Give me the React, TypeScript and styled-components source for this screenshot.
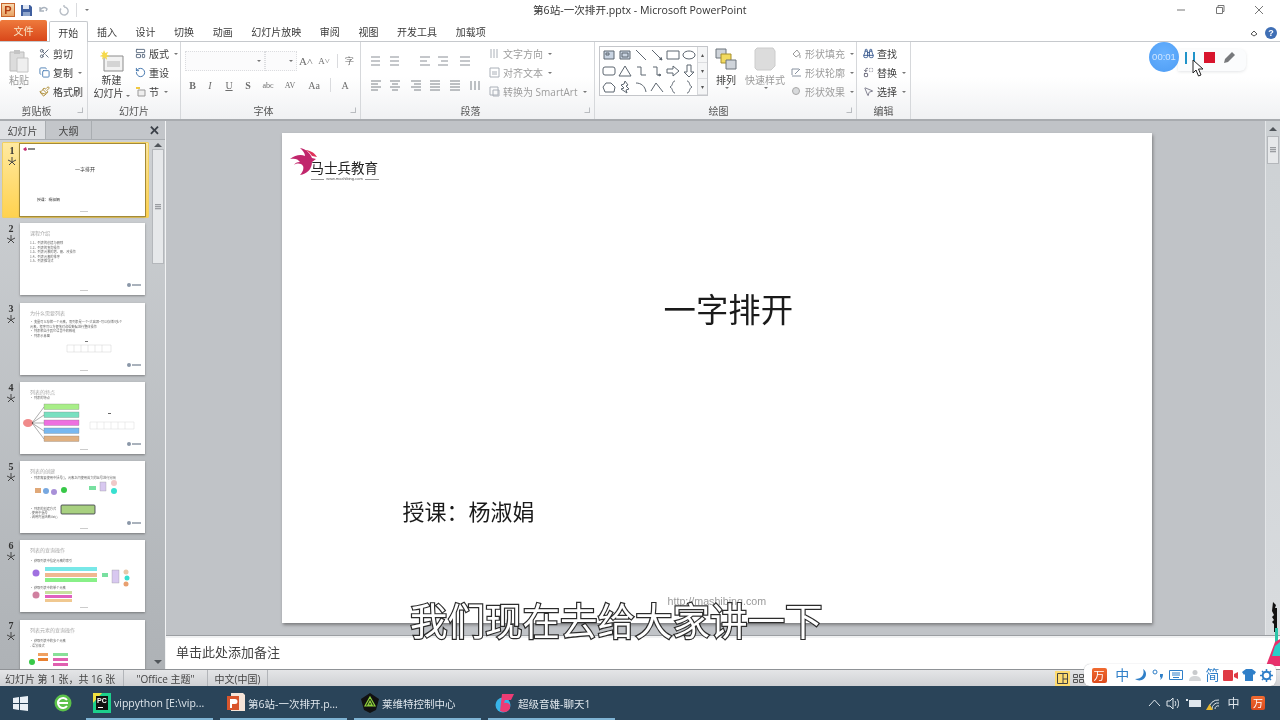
import React from 'react'
import styled, { createGlobalStyle } from 'styled-components'
import { Scissors, Copy, Paintbrush, LayoutTemplate, RotateCcw, Binoculars, Replace, MousePointer2 } from 'lucide-react'

const GlobalStyle = createGlobalStyle`
    html, body {
        margin: 0;
        padding: 0;
        background: #fff;
    }
    * {
        box-sizing: border-box;
    }
`

const CJK = `"Open Sans", "Noto Sans CJK SC", sans-serif`

const Page = styled.div`
    position: relative;
    display: flex;
    flex-direction: column;
    width: 1280px;
    height: 720px;
    overflow: hidden;
    background: #fff;
    font-family: ${CJK};
    font-size: 10px;
    color: #3b3b3b;
    filter: blur(0.3px);
`

/* ---------- title bar ---------- */
const TitleBar = styled.div`
    flex: 0 0 20px;
    display: flex;
    align-items: center;
    position: relative;
    padding-left: 1px;
    background: #fff;
`
const QuickIcons = styled.div`
    display: flex;
    align-items: center;
    gap: 6px;
    width: 500px;
`
const PptBadge = styled.div`
    width: 14px;
    height: 14px;
    background: linear-gradient(#f7d9b0, #e8a264);
    border: 1px solid #c8642c;
    color: #b33c10;
    font: bold 11px/12px "Liberation Sans", sans-serif;
    text-align: center;
`
const TitleText = styled.div`
    position: absolute;
    left: 533px;
    top: 3px;
    font-size: 10.6px;
    line-height: 15px;
    color: #333;
    white-space: nowrap;
`
const WindowButtons = styled.div`
    display: flex;
    margin-left: auto;
    padding-right: 2px;
`
const WindowButton = styled.div`
    width: 39px;
    height: 20px;
    display: flex;
    align-items: center;
    justify-content: center;
`

/* ---------- tabs ---------- */
const TabRow = styled.div`
    flex: 0 0 21px;
    display: flex;
    align-items: flex-end;
    background: #fff;
    border-bottom: 1px solid #c6c9cd;
    position: relative;
`
const FileTab = styled.div`
    width: 47px;
    height: 21px;
    margin-right: 2px;
    display: flex;
    align-items: center;
    justify-content: center;
    background: linear-gradient(#ee7a3c, #d9471a);
    color: #f8e6c8;
    border-radius: 2px 2px 0 0;
`
const Tab = styled.div<{ $active?: boolean }>`
    height: ${p => (p.$active ? '20px' : '19px')};
    padding: 0 9.3px 1px;
    display: flex;
    align-items: center;
    white-space: nowrap;
    color: #3a3a3a;
    ${p =>
        p.$active
            ? `
        background: #fff;
        border: 1px solid #c6c9cd;
        border-bottom: 0;
        margin-bottom: -1px;
        height: 21px;
        border-radius: 2px 2px 0 0;
        padding: 0 8.3px;
    `
            : ''}
`
const HelpArea = styled.div`
    margin-left: auto;
    display: flex;
    align-items: center;
    gap: 7px;
    padding: 0 3px 2px 0;
`
const HelpDot = styled.div`
    width: 12px;
    height: 12px;
    border-radius: 50%;
    background: #3f6fb5;
    color: #fff;
    font: bold 9px/12px "Liberation Sans", sans-serif;
    text-align: center;
`

/* ---------- ribbon ---------- */
const Ribbon = styled.div`
    flex: 0 0 79px;
    min-height: 0;
    display: flex;
    background: linear-gradient(#ffffff 45%, #f0f1f3);
    border-bottom: 2px solid #a8abaf;
`
const Group = styled.div<{ $w: number }>`
    flex: 0 0 ${p => p.$w}px;
    min-height: 0;
    display: flex;
    flex-direction: column;
    border-right: 1px solid #d6d8db;
`
const GroupBody = styled.div<{ $pad?: string; $gap?: number }>`
    flex: 1;
    display: flex;
    padding: ${p => p.$pad || '0'};
    gap: ${p => p.$gap || 0}px;
    min-height: 0;
`
const GroupLabel = styled.div<{ $launch?: boolean }>`
    position: relative;
    flex: 0 0 18px;
    padding: 4px ${p => (p.$launch ? 14 : 0)}px 0 0;
    text-align: center;
    line-height: 15px;
    color: #555;
`
const Launcher = styled.span`
    position: absolute;
    right: 4px;
    top: 7px;
    width: 6px;
    height: 6px;
    border: 1px solid #b9bcc0;
    border-top-color: transparent;
    border-left-color: transparent;
`
const BigButton = styled.div<{ $w: number; $dim?: boolean; $top?: number }>`
    width: ${p => p.$w}px;
    padding-top: ${p => p.$top || 0}px;
    display: flex;
    flex-direction: column;
    align-items: center;
    line-height: 13px;
    color: ${p => (p.$dim ? '#9a9a9a' : '#3b3b3b')};
    white-space: nowrap;
`
const BigIcon = styled.div<{ $h: number }>`
    height: ${p => p.$h}px;
    display: flex;
    align-items: center;
    justify-content: center;
`
const BigText = styled.div<{ $top?: number }>`
    margin-top: ${p => p.$top || 0}px;
`
const Stack = styled.div`
    display: flex;
    flex-direction: column;
    gap: 2px;
    padding-top: 3px;
`
const SmallButton = styled.div<{ $dim?: boolean }>`
    height: 17.5px;
    display: flex;
    align-items: center;
    gap: 3px;
    white-space: nowrap;
    color: ${p => (p.$dim ? '#9c9c9c' : '#3b3b3b')};
    font-size: 10px;
`
const Caret = styled.span`
    display: inline-block;
    width: 0;
    height: 0;
    margin-left: 2px;
    border: 2px solid transparent;
    border-top: 2.5px solid #777;
    border-bottom: 0;
`
const FontRows = styled.div`
    display: flex;
    flex-direction: column;
    gap: 4px;
    padding: 9px 0 0 4px;
`
const ListRows = styled(FontRows)`
    padding-left: 7px;
    width: 127px;
`
const FontRow = styled.div<{ $gap?: number }>`
    height: 20px;
    display: flex;
    align-items: center;
    gap: ${p => p.$gap ?? 0}px;
`
const Combo = styled.div<{ $w: number }>`
    width: ${p => p.$w}px;
    height: 20px;
    display: flex;
    align-items: center;
    justify-content: flex-end;
    padding-right: 3px;
    border: 1px dotted #dcdde0;
    background: #fbfbfc;
`
const Glyph = styled.span<{ $w: number; $b?: boolean; $i?: boolean; $u?: boolean; $size?: number }>`
    width: ${p => p.$w}px;
    text-align: center;
    font-family: "Liberation Serif", serif;
    font-size: ${p => p.$size || 10}px;
    color: #6d6d6d;
    font-weight: ${p => (p.$b ? 'bold' : 'normal')};
    font-style: ${p => (p.$i ? 'italic' : 'normal')};
    text-decoration: ${p => (p.$u ? 'underline' : 'none')};
`
const Bar = styled.span<{ $flush?: boolean }>`
    width: 1px;
    height: 14px;
    margin: ${p => (p.$flush ? '0' : '0 4px')};
    background: #dadbde;
`
const Gallery = styled.div`
    margin: 4px 0 0 4px;
    display: flex;
    width: 109px;
    height: 50px;
    background: #fff;
    border: 1px solid #c4c6ca;
`
const ShapeGrid = styled.div`
    display: grid;
    grid-template-columns: repeat(6, 16px);
    grid-auto-rows: 16px;
    width: 97px;
    padding-left: 1px;
`
const GalleryScroll = styled.div`
    flex: 1;
    display: flex;
    flex-direction: column;
    border-left: 1px solid #d6d8db;
    background: #f4f5f6;
`
const GalleryStep = styled.div`
    flex: 1;
    display: flex;
    align-items: center;
    justify-content: center;
    border-bottom: 1px solid #dcdde0;
    font-size: 6px;
    color: #555;
    font-family: "DejaVu Sans", sans-serif;
`

/* ---------- main area ---------- */
const Main = styled.div`
    flex: 1;
    min-height: 0;
    display: flex;
    background: #c0c3c7;
`
const SidePane = styled.div`
    flex: 0 0 166px;
    display: flex;
    flex-direction: column;
    background: linear-gradient(#cfd2d5, #aeb2b6);
    border-right: 1px solid #f2f3f4;
`
const PaneTabs = styled.div`
    flex: 0 0 19px;
    display: flex;
    align-items: stretch;
    background: #c3c6ca;
    border-bottom: 1px solid #a9adb1;
`
const PaneTab = styled.div<{ $active?: boolean }>`
    width: 46px;
    display: flex;
    align-items: center;
    justify-content: center;
    font-size: 10px;
    background: ${p => (p.$active ? '#dfe1e4' : 'transparent')};
    border-right: 1px solid #a9adb1;
    color: #444;
`
const PaneClose = styled.div`
    margin-left: auto;
    width: 21px;
    display: flex;
    align-items: center;
    justify-content: center;
    font: bold 13px "Liberation Sans", sans-serif;
    color: #3b4048;
`
const PaneBody = styled.div`
    flex: 1;
    min-height: 0;
    display: flex;
    overflow: hidden;
`
const ThumbList = styled.div`
    flex: 0 0 150px;
    padding-top: 2px;
    display: flex;
    flex-direction: column;
    gap: 3.3px;
    overflow: hidden;
`
const ThumbRow = styled.div<{ $active?: boolean }>`
    flex: 0 0 76px;
    margin-left: 2px;
    width: 147px;
    display: flex;
    align-items: center;
    padding-left: 18px;
    position: relative;
    border-radius: 1px;
    ${p =>
        p.$active
            ? `
        background: linear-gradient(#ffe9a0, #ffd24f);
        border: 1px solid #f2d060;
        padding-left: 17px;
    `
            : ''}
`
const ThumbIndex = styled.div`
    position: absolute;
    left: 2px;
    top: 2px;
    width: 14px;
    display: flex;
    flex-direction: column;
    align-items: center;
    font: bold 10px/12px "Liberation Serif", serif;
    color: #333;
`
const ThumbCard = styled.div<{ $active?: boolean }>`
    width: 125px;
    height: 72px;
    background: #fff;
    box-shadow: 0 1px 2px rgba(60, 60, 60, 0.5);
    ${p => (p.$active ? 'outline: 1px solid #a38a38;' : '')}
    svg {
        display: block;
        font-family: "Noto Sans CJK SC", sans-serif;
    }
`
const PaneScroll = styled.div`
    flex: 0 0 13px;
    margin: 3px 0 0 1px;
    padding-bottom: 5px;
    display: flex;
    flex-direction: column;
    align-items: center;
`
const ScrollThumb = styled.div<{ $h: number; $mt?: number }>`
    width: 12px;
    height: ${p => p.$h}px;
    margin-top: ${p => p.$mt || 0}px;
    background: #e6e8ea;
    border: 1px solid #b4b7bb;
    display: flex;
    align-items: center;
    justify-content: center;
`
const Grip = styled.div`
    width: 6px;
    height: 6px;
    background: repeating-linear-gradient(#9a9da1 0 1px, #d0d2d5 1px 2px);
`
const Arrow = styled.div<{ $down?: boolean; $mt?: string }>`
    width: 0;
    height: 0;
    margin-top: ${p => p.$mt || '0'};
    border: 4px solid transparent;
    ${p => (p.$down ? 'border-top: 4px solid #50555a; border-bottom: 0;' : 'border-bottom: 4px solid #50555a; border-top: 0;')}
`

const Center = styled.div`
    flex: 1;
    min-width: 0;
    display: flex;
    flex-direction: column;
`
const WorkRow = styled.div`
    flex: 1;
    min-height: 0;
    display: flex;
    border-bottom: 1px solid #9b9ea2;
`
const Canvas = styled.div`
    flex: 1;
    display: flex;
    justify-content: center;
    padding-top: 12px;
    padding-left: 2px;
`
const Slide = styled.div`
    position: relative;
    width: 870px;
    height: 490px;
    background: #fff;
    box-shadow: 1px 2px 3px rgba(70, 70, 70, 0.55);
`
const Logo = styled.div`
    position: absolute;
    left: 7px;
    top: 14px;
    width: 92px;
    height: 36px;
`
const LogoName = styled.div`
    position: absolute;
    left: 22px;
    top: 13px;
    font-size: 13.5px;
    line-height: 17px;
    color: #222;
    white-space: nowrap;
`
const LogoUrl = styled.div`
    position: absolute;
    left: 22px;
    top: 29px;
    width: 68px;
    display: flex;
    align-items: center;
    gap: 2px;
    font: 4px/6px "Liberation Sans", sans-serif;
    color: #555;
    &::before,
    &::after {
        content: '';
        flex: 1;
        height: 1px;
        background: #999;
    }
`
const SlideTitle = styled.div`
    position: absolute;
    left: 382px;
    top: 156px;
    font-size: 32.4px;
    line-height: 40px;
    color: #1a1a1a;
    white-space: nowrap;
`
const SlideAuthor = styled.div`
    position: absolute;
    left: 121px;
    top: 363px;
    font-size: 22px;
    line-height: 30px;
    color: #1a1a1a;
    white-space: nowrap;
`
const SlideUrl = styled.div`
    position: absolute;
    left: 386px;
    top: 461px;
    font: 10.7px/14px "Liberation Sans", sans-serif;
    color: #9a9a9a;
`
const MainScroll = styled.div`
    flex: 0 0 15px;
    display: flex;
    flex-direction: column;
    align-items: center;
    padding-top: 6px;
    background: linear-gradient(#cdd1d4, #d8dbde);
    border-left: 1px solid #e4e6e8;
`
const Notes = styled.div`
    flex: 0 0 33px;
    padding: 5px 0 0 10px;
    background: #fff;
    border-top: 2px solid #f0f1f2;
    font-size: 13px;
    line-height: 18px;
    color: #444;
`

/* ---------- status bar ---------- */
const StatusBar = styled.div`
    flex: 0 0 17px;
    display: flex;
    align-items: center;
    background: linear-gradient(#e4e5e7, #cfd1d4);
    border-top: 1px solid #8f9296;
    font-size: 10px;
    color: #444;
`
const StatusCell = styled.div<{ $w: number; $center?: boolean }>`
    width: ${p => p.$w}px;
    height: 100%;
    display: flex;
    align-items: center;
    justify-content: ${p => (p.$center ? 'center' : 'flex-start')};
    padding-left: ${p => (p.$center ? 0 : 5)}px;
    border-right: 1px solid #b2b5b9;
    white-space: nowrap;
`
const ViewButtons = styled.div`
    margin-left: auto;
    margin-right: 194px;
    display: flex;
    align-items: center;
    gap: 1px;
`
const ViewButton = styled.div<{ $on?: boolean }>`
    width: 15px;
    height: 15px;
    display: flex;
    align-items: center;
    justify-content: center;
    background: ${p => (p.$on ? '#ffdc70' : 'transparent')};
`

/* ---------- taskbar ---------- */
const Taskbar = styled.div`
    flex: 0 0 34px;
    display: flex;
    align-items: center;
    background: #2a4459;
    color: #dfe6ec;
    font-size: 10.5px;
`
const Launch = styled.div<{ $w: number }>`
    width: ${p => p.$w}px;
    height: 100%;
    display: flex;
    align-items: center;
    justify-content: center;
`
const TaskItem = styled.div`
    position: relative;
    width: 127px;
    height: 100%;
    margin-right: 7px;
    padding-left: 7px;
    display: flex;
    align-items: center;
    gap: 3px;
    white-space: nowrap;
    &::after {
        content: '';
        position: absolute;
        left: 0;
        right: 0;
        bottom: 0;
        height: 2px;
        background: #7fb4d4;
    }
`
const Tray = styled.div`
    margin-left: auto;
    display: flex;
    align-items: center;
    gap: 5px;
    padding-right: 10px;
    font-size: 12px;
`
const TrayCell = styled.div<{ $w: number }>`
    width: ${p => p.$w}px;
    display: flex;
    justify-content: center;
`
const WanBadge = styled.div<{ $size: number }>`
    width: ${p => p.$size}px;
    height: ${p => p.$size}px;
    border-radius: 2px;
    background: linear-gradient(#f06a30, #dc4a1c);
    color: #fff;
    display: flex;
    align-items: center;
    justify-content: center;
    font-size: ${p => p.$size - 4}px;
    line-height: 1;
`

/* ---------- things lying over the page ---------- */
const Recorder = styled.div`
    position: absolute;
    left: 1149px;
    top: 42px;
    height: 30px;
    display: flex;
    align-items: center;
`
const Timer = styled.div`
    width: 30px;
    height: 30px;
    border-radius: 50%;
    background: radial-gradient(circle at 50% 40%, #68b2ff, #4d9cf4);
    color: #cfe6ff;
    font: 9.5px/30px "Liberation Sans", sans-serif;
    text-align: center;
    z-index: 1;
`
const RecorderTray = styled.div`
    height: 22px;
    margin-top: 5px;
    margin-left: -1px;
    padding: 0 10px 4px 7px;
    display: flex;
    align-items: center;
    background: #fbfcfd;
    border-radius: 0 6px 6px 0;
    box-shadow: 0 1px 3px rgba(120, 130, 140, 0.2);
`
const PauseBar = styled.span`
    width: 2px;
    height: 12px;
    margin-right: 6px;
    background: #1f93c9;
`
const StopSquare = styled.span`
    width: 11px;
    height: 11px;
    margin: 0 8px 0 3px;
    background: #d8152d;
`
const Cursor = styled.svg`
    position: absolute;
    left: 1192px;
    top: 59px;
`
const Subtitle = styled.div`
    position: absolute;
    left: 410px;
    top: 598px;
    font-size: 37.5px;
    font-weight: 400;
    line-height: 46px;
    color: #fff;
    white-space: nowrap;
    -webkit-text-stroke: 2.4px #2c2c2c;
    paint-order: stroke fill;
`
const ImeBar = styled.div`
    position: absolute;
    left: 1084px;
    top: 664px;
    width: 192px;
    height: 22px;
    padding-left: 6px;
    display: flex;
    align-items: center;
    background: #fff;
    border-radius: 6px;
    box-shadow: 0 0 1px rgba(80, 90, 100, 0.5);
`
const ImeCell = styled.div<{ $gapLeft?: number; $size?: number }>`
    width: 18.2px;
    margin-left: ${p => p.$gapLeft || 0}px;
    display: flex;
    justify-content: center;
    font-size: ${p => p.$size || 14}px;
    line-height: 18px;
    color: #2f7fc8;
`
const Mascot = styled.svg`
    position: absolute;
    left: 1262px;
    top: 598px;
`

const tabs = ['插入', '设计', '切换', '动画', '幻灯片放映', '审阅', '视图', '开发工具', '加载项']

const shapePaths = [
    'M3 4h10v8H3z M5 6h3v2H5z',
    'M3 4h10v8H3z M5 6h6v4H5z',
    'M3 3l10 10',
    'M3 3l10 10 M13 13l-3-1 M13 13l-1-3',
    'M2 4h12v8H2z',
    'M8 4a6 4 0 1 0 .01 0z',
    'M4 4h8a2 2 0 0 1 2 2v4a2 2 0 0 1-2 2H4a2 2 0 0 1-2-2V6a2 2 0 0 1 2-2z',
    'M8 3l6 10H2z',
    'M4 4h4v8h5',
    'M4 4h4v8h4 M12 12l-2-1v2z',
    'M2 6h6V3l6 5-6 5v-3H2z',
    'M6 2h4v7h3l-5 5-5-5h3z',
    'M5 4l5 0 4 4-1 5H4L2 8z',
    'M8 2l3 4-2 1 3 3-3 1 1 3-6-4 3-1-3-3 3-1z',
    'M3 4c5 0 9 3 10 9',
    'M2 12l5-8 7 9',
    'M10 2C7 2 8 7 5 8c3 1 2 6 5 6',
    'M6 2c3 0 2 5 5 6-3 1-2 6-5 6',
]

function ShapeIcon({ d, dark }: { d: string; dark?: boolean }): React.ReactElement {
    return (
        <svg width="16" height="16" viewBox="0 0 16 16">
            <path d={d} fill={dark ? '#c9d4e2' : 'none'} stroke="#5d6670" strokeWidth="1" />
        </svg>
    )
}

const thumbTitle: Record<number, string> = {
    2: '课程介绍',
    3: '为什么需要列表',
    4: '列表的特点',
    5: '列表的创建',
    6: '列表的查询操作',
    7: '列表元素的查询操作',
}

const thumbBody: Record<number, [number, string][]> = {
    2: [
        [21, '1.1、列表的创建与删除'],
        [25.5, '1.2、列表的查询操作'],
        [30, '1.3、列表元素的增、删、改操作'],
        [34.5, '1.4、列表元素的排序'],
        [39, '1.5、列表推导式'],
    ],
    3: [
        [20, '• 变量可以存储一个元素，而列表是一个"大容器"可以存储N多个'],
        [24.5, '  元素，程序可以方便地对这些数据进行整体操作'],
        [29, '• 列表相当于其它语言中的数组'],
        [34, '• 列表示意图'],
    ],
    4: [[17, '• 列表的特点']],
    5: [
        [18, '• 列表需要使用中括号[]，元素之间使用英文的逗号进行分隔'],
        [49, '• 列表的创建方式'],
        [53, '  - 使用中括号'],
        [57, '  - 调用内置函数list()'],
    ],
    6: [
        [22, '• 获取列表中指定元素的索引'],
        [49, '• 获取列表中的单个元素'],
    ],
    7: [
        [22, '• 获取列表中的多个元素'],
        [27, '  - 语法格式'],
    ],
}

function ThumbArt({ n }: { n: number }): React.ReactElement {
    const mark = (
        <g>
            <circle cx="109" cy="62" r="2" fill="#8a97a8" />
            <rect x="112" y="61" width="9" height="2" fill="#aab2bc" />
        </g>
    )
    return (
        <svg width="125" height="72" viewBox="0 0 125 72">
            {n === 1 && (
                <g>
                    <path d="M3 5l3-2 1 3-2 1z" fill="#c22c70" />
                    <rect x="8" y="4" width="7" height="2" fill="#888" />
                    <text x="55" y="27" fontSize="5" fill="#333">
                        一字排开
                    </text>
                    <text x="17" y="57" fontSize="3.8" fill="#333">
                        授课：杨淑娟
                    </text>
                    <rect x="60" y="67" width="8" height="1" fill="#ccc" />
                </g>
            )}
            {n !== 1 && (
                <text x="10" y="12" fontSize="5" fill="#a8a8a8">
                    {thumbTitle[n]}
                </text>
            )}
            {(thumbBody[n] || []).map(([y, t]) => (
                <text key={y} x="10" y={y} fontSize="3.2" fill="#666">
                    {t}
                </text>
            ))}
            {n === 3 && (
                <g>
                    <path d="M47 42h44v7H47zM54 42v7M61 42v7M68 42v7M75 42v7M82 42v7" fill="none" stroke="#d0d0d0" strokeWidth=".5" />
                    <rect x="65" y="38" width="3" height="1" fill="#777" />
                </g>
            )}
            {n === 4 && (
                <g>
                    <ellipse cx="8" cy="41" rx="5" ry="4" fill="#f08a8a" />
                    {['#a8ee88', '#78e0c0', '#ee70e0', '#78b8f0', '#e0b080'].map((c, i) => (
                        <g key={c}>
                            <path d={`M12 41L24 ${25 + i * 8}`} stroke="#333" strokeWidth=".4" />
                            <rect x="24" y={22 + i * 8} width="35" height="5.5" fill={c} stroke="#777" strokeWidth=".3" />
                        </g>
                    ))}
                    <path d="M70 40h44v7H70zM77 40v7M84 40v7M91 40v7M98 40v7M105 40v7" fill="none" stroke="#d8d8d8" strokeWidth=".5" />
                    <rect x="88" y="31" width="3" height="1" fill="#666" />
                </g>
            )}
            {n === 5 && (
                <g>
                    <rect x="15" y="27" width="6" height="5" fill="#e0a878" />
                    <circle cx="26" cy="30" r="3" fill="#78a8e0" />
                    <circle cx="34" cy="31" r="3" fill="#a890d8" />
                    <circle cx="44" cy="29" r="3" fill="#38c848" />
                    <rect x="69" y="25" width="7" height="4" fill="#78e0a0" />
                    <rect x="80" y="21" width="6" height="9" fill="#d8c8f0" stroke="#888" strokeWidth=".3" />
                    <circle cx="94" cy="22" r="3" fill="#f0c8c8" />
                    <circle cx="94" cy="30" r="3" fill="#38e0d0" />
                    <rect x="41" y="44" width="34" height="9" rx="1" fill="#a8d080" stroke="#334" strokeWidth=".8" />
                </g>
            )}
            {n === 6 && (
                <g>
                    <circle cx="16" cy="33" r="3.5" fill="#a070e0" />
                    <rect x="25" y="27" width="52" height="4" fill="#78e8e8" />
                    <rect x="25" y="33" width="52" height="4" fill="#f0b890" />
                    <rect x="25" y="38" width="52" height="4" fill="#88f088" />
                    <circle cx="16" cy="55" r="3.5" fill="#d080a0" />
                    <rect x="25" y="51" width="27" height="3" fill="#c8e0a0" />
                    <rect x="25" y="55" width="27" height="3" fill="#e060c0" />
                    <rect x="25" y="59" width="27" height="3" fill="#f0c890" />
                    <rect x="82" y="33" width="6" height="4" fill="#78e0a0" />
                    <rect x="92" y="30" width="7" height="13" fill="#d8c8f0" stroke="#888" strokeWidth=".3" />
                    <circle cx="106" cy="32" r="2.5" fill="#e8c8a8" />
                    <circle cx="107" cy="38" r="2.5" fill="#38e0d0" />
                    <circle cx="106" cy="44" r="2.5" fill="#e8a070" />
                </g>
            )}
            {n === 7 && (
                <g>
                    <circle cx="12" cy="42" r="3" fill="#38c848" />
                    <rect x="18" y="33" width="10" height="3" fill="#f0a060" />
                    <rect x="18" y="38" width="10" height="3" fill="#e88030" />
                    <rect x="33" y="33" width="15" height="3" fill="#88e098" />
                    <rect x="33" y="38" width="15" height="3" fill="#e060b0" />
                    <rect x="33" y="43" width="15" height="3" fill="#e060b0" />
                </g>
            )}
            {n > 1 && n < 6 && mark}
            {n > 1 && n < 7 && <rect x="60" y="67" width="8" height="1" fill="#ccc" />}
        </svg>
    )
}

const slides = [1, 2, 3, 4, 5, 6, 7]

export default function App(): React.ReactElement {
    return (
        <Page>
            <GlobalStyle />
            <TitleBar>
                <QuickIcons>
                    <PptBadge>P</PptBadge>
                    <svg width="11" height="11" viewBox="0 0 11 11">
                        <path d="M0 0h9l2 2v9H0z" fill="#3f5f9f" />
                        <path d="M2 0h6v4H2z" fill="#dfe6f2" />
                        <path d="M2 7h7v4H2z" fill="#8fa6cc" />
                    </svg>
                    <svg width="14" height="11" viewBox="0 0 14 11">
                        <path d="M2 6a4 4 0 0 1 7-2l-1 2 M2 2v4h4" fill="none" stroke="#a9b2bd" strokeWidth="1.4" />
                    </svg>
                    <svg width="12" height="11" viewBox="0 0 12 11">
                        <path d="M6 2a4 4 0 1 1-3 1.5 M6 2V0" fill="none" stroke="#b8bec6" strokeWidth="1.4" />
                    </svg>
                    <Bar $flush />
                    <Caret />
                </QuickIcons>
                <TitleText>第6站-一次排开.pptx - Microsoft PowerPoint</TitleText>
                <WindowButtons>
                    <WindowButton>
                        <svg width="10" height="10">
                            <path d="M1 5h8" stroke="#777" />
                        </svg>
                    </WindowButton>
                    <WindowButton>
                        <svg width="10" height="10">
                            <path d="M1.5 2.5h6v6h-6z M3 2V.5h6v6H8" fill="none" stroke="#777" />
                        </svg>
                    </WindowButton>
                    <WindowButton>
                        <svg width="10" height="10">
                            <path d="M1 1l8 8M9 1l-8 8" stroke="#777" />
                        </svg>
                    </WindowButton>
                </WindowButtons>
            </TitleBar>

            <TabRow>
                <FileTab>文件</FileTab>
                <Tab $active>开始</Tab>
                {tabs.map(t => (
                    <Tab key={t}>{t}</Tab>
                ))}
                <HelpArea>
                    <svg width="8" height="8" viewBox="0 0 8 8">
                        <path d="M1 5l3-3 3 3-3 2z" fill="none" stroke="#555" />
                    </svg>
                    <HelpDot>?</HelpDot>
                </HelpArea>
            </TabRow>

            <Ribbon>
                <Group $w={88}>
                    <GroupBody $pad="0 0 0 8px" $gap={9}>
                        <BigButton $w={22} $dim $top={6}>
                            <BigIcon $h={26}>
                                <svg width="20" height="24" viewBox="0 0 20 24">
                                    <path d="M1 3h14v19H1z" fill="#dcdcdc" stroke="#bbb" />
                                    <path d="M5 1h6v4H5z" fill="#c4c4c4" />
                                    <path d="M8 9h11v14H8z" fill="#efefef" stroke="#c4c4c4" />
                                </svg>
                            </BigIcon>
                            <BigText>粘贴</BigText>
                            <Caret />
                        </BigButton>
                        <Stack>
                            <SmallButton>
                                <Scissors size={11} color="#5a6678" />
                                剪切
                            </SmallButton>
                            <SmallButton>
                                <Copy size={11} color="#4c7fb5" />
                                复制
                                <Caret />
                            </SmallButton>
                            <SmallButton>
                                <Paintbrush size={11} color="#a8872c" />
                                格式刷
                            </SmallButton>
                        </Stack>
                    </GroupBody>
                    <GroupLabel $launch>
                        剪贴板
                        <Launcher />
                    </GroupLabel>
                </Group>

                <Group $w={93}>
                    <GroupBody $pad="0 0 0 3px" $gap={3}>
                        <BigButton $w={41} $top={6}>
                            <BigIcon $h={26}>
                                <svg width="24" height="22" viewBox="0 0 24 22">
                                    <path d="M4 6h19v15H4z" fill="#f2f2f2" stroke="#8c8c8c" />
                                    <path d="M7 11h13v6H7z" fill="#d4d4d4" />
                                    <path d="M4 0l1.2 3 3-1-1.5 2.8 3 1.4-3.2.6.6 3L4 7.5 2 9.8l.6-3-3-.6 3-1.4L1 2l2 1z" fill="#f6d94a" />
                                </svg>
                            </BigIcon>
                            <BigText>新建</BigText>
                            <div>
                                幻灯片
                                <Caret />
                            </div>
                        </BigButton>
                        <Stack>
                            <SmallButton>
                                <LayoutTemplate size={11} color="#5a6a80" />
                                版式
                                <Caret />
                            </SmallButton>
                            <SmallButton>
                                <RotateCcw size={11} color="#3a6fa8" />
                                重设
                            </SmallButton>
                            <SmallButton>
                                <svg width="11" height="11" viewBox="0 0 11 11">
                                    <path d="M1 1h4v2H1z" fill="#f0c840" />
                                    <path d="M3 4h7v6H3z" fill="#eee" stroke="#999" />
                                </svg>
                                节
                                <Caret />
                            </SmallButton>
                        </Stack>
                    </GroupBody>
                    <GroupLabel>幻灯片</GroupLabel>
                </Group>

                <Group $w={180}>
                    <GroupBody>
                        <FontRows>
                            <FontRow>
                                <Combo $w={80}>
                                    <Caret />
                                </Combo>
                                <Combo $w={32}>
                                    <Caret />
                                </Combo>
                                <Glyph $w={18} $size={11}>
                                    A˄
                                </Glyph>
                                <Glyph $w={18} $size={9}>
                                    A˅
                                </Glyph>
                                <Bar />
                                <Glyph $w={14} $size={9}>
                                    字
                                </Glyph>
                            </FontRow>
                            <FontRow>
                                <Glyph $w={15} $b>
                                    B
                                </Glyph>
                                <Glyph $w={20} $i>
                                    I
                                </Glyph>
                                <Glyph $w={18} $u>
                                    U
                                </Glyph>
                                <Glyph $w={20} $b>
                                    S
                                </Glyph>
                                <Glyph $w={20} $size={8}>
                                    abc
                                </Glyph>
                                <Glyph $w={24} $size={8}>
                                    AV
                                </Glyph>
                                <Glyph $w={24}>Aa</Glyph>
                                <Bar />
                                <Glyph $w={20}>A</Glyph>
                            </FontRow>
                        </FontRows>
                    </GroupBody>
                    <GroupLabel $launch>
                        字体
                        <Launcher />
                    </GroupLabel>
                </Group>

                <Group $w={234}>
                    <GroupBody $gap={1}>
                        <ListRows>
                            <FontRow $gap={6}>
                                <svg width="120" height="14" viewBox="0 0 120 14">
                                    <path d="M3 3h9M3 7h9M3 11h9M22 3h9M22 7h9M22 11h9M52 3h10M52 7h7M52 11h10M70 3h10M73 7h7M70 11h10M92 3h10M92 7h10M92 11h10" stroke="#8a8f96" fill="none" />
                                </svg>
                            </FontRow>
                            <FontRow $gap={6}>
                                <svg width="120" height="14" viewBox="0 0 120 14">
                                    <path d="M3 3h10M3 6h7M3 9h10M3 12h7M22 3h10M24 6h6M22 9h10M24 12h6M43 3h10M46 6h7M43 9h10M46 12h7M62 3h10M62 6h10M62 9h10M62 12h10M82 3h10M82 6h10M82 9h10M82 12h10M103 3v9M107 3v9M111 3v9" stroke="#7d8288" fill="none" />
                                </svg>
                            </FontRow>
                        </ListRows>
                        <Stack>
                            <SmallButton $dim>
                                <svg width="11" height="11">
                                    <path d="M2 1v9M5 1v9M8 1v9" stroke="#aab0b8" />
                                </svg>
                                文字方向
                                <Caret />
                            </SmallButton>
                            <SmallButton $dim>
                                <svg width="11" height="11">
                                    <path d="M1 1h9v9H1zM3 5h5M3 7h5" fill="none" stroke="#aab0b8" />
                                </svg>
                                对齐文本
                                <Caret />
                            </SmallButton>
                            <SmallButton $dim>
                                <svg width="11" height="11">
                                    <path d="M1 1h8v8H1z M4 4h6v6H4z" fill="none" stroke="#aab0b8" />
                                </svg>
                                转换为 SmartArt
                                <Caret />
                            </SmallButton>
                        </Stack>
                    </GroupBody>
                    <GroupLabel $launch>
                        段落
                        <Launcher />
                    </GroupLabel>
                </Group>

                <Group $w={262}>
                    <GroupBody $gap={5}>
                        <Gallery>
                            <ShapeGrid>
                                {shapePaths.map((d, i) => (
                                    <ShapeIcon key={d} d={d} dark={i < 2} />
                                ))}
                            </ShapeGrid>
                            <GalleryScroll>
                                <GalleryStep>▴</GalleryStep>
                                <GalleryStep>▾</GalleryStep>
                                <GalleryStep>▾</GalleryStep>
                            </GalleryScroll>
                        </Gallery>
                        <BigButton $w={26} $top={5}>
                            <BigIcon $h={24}>
                                <svg width="22" height="24" viewBox="0 0 22 24">
                                    <path d="M1 2h10v9H1z" fill="#cfd4da" stroke="#6c747c" />
                                    <path d="M6 7h10v9H6z" fill="#f2da60" stroke="#a8902c" />
                                    <path d="M11 13h10v9H11z" fill="#cfd4da" stroke="#6c747c" />
                                </svg>
                            </BigIcon>
                            <BigText $top={3}>排列</BigText>
                            <Caret />
                        </BigButton>
                        <BigButton $w={42} $dim $top={5}>
                            <BigIcon $h={24}>
                                <svg width="22" height="24" viewBox="0 0 22 24">
                                    <path d="M3 1h16l2 3v15l-4 4H3l-2-2V3z" fill="#dcdcdc" stroke="#ccc" />
                                </svg>
                            </BigIcon>
                            <BigText $top={3}>快速样式</BigText>
                            <Caret />
                        </BigButton>
                        <Stack>
                            <SmallButton $dim>
                                <svg width="11" height="11">
                                    <path d="M2 6l4-4 3 4-4 3zM9 7v3" fill="none" stroke="#9a9a9a" />
                                </svg>
                                形状填充
                                <Caret />
                            </SmallButton>
                            <SmallButton $dim>
                                <svg width="11" height="11">
                                    <path d="M1 2h7M1 2v6M1 9h9M4 7l5-5" fill="none" stroke="#8892a0" />
                                </svg>
                                形状轮廓
                                <Caret />
                            </SmallButton>
                            <SmallButton $dim>
                                <svg width="11" height="11">
                                    <circle cx="5" cy="5" r="3.5" fill="#d8dadc" stroke="#a8a8a8" />
                                </svg>
                                形状效果
                                <Caret />
                            </SmallButton>
                        </Stack>
                    </GroupBody>
                    <GroupLabel $launch>
                        绘图
                        <Launcher />
                    </GroupLabel>
                </Group>

                <Group $w={54}>
                    <GroupBody $pad="0 0 0 6px">
                        <Stack>
                            <SmallButton>
                                <Binoculars size={11} color="#33558c" />
                                查找
                            </SmallButton>
                            <SmallButton>
                                <Replace size={11} color="#667" />
                                替换
                                <Caret />
                            </SmallButton>
                            <SmallButton>
                                <MousePointer2 size={11} color="#778" />
                                选择
                                <Caret />
                            </SmallButton>
                        </Stack>
                    </GroupBody>
                    <GroupLabel>编辑</GroupLabel>
                </Group>
            </Ribbon>

            <Main>
                <SidePane>
                    <PaneTabs>
                        <PaneTab $active>幻灯片</PaneTab>
                        <PaneTab>大纲</PaneTab>
                        <PaneClose>✕</PaneClose>
                    </PaneTabs>
                    <PaneBody>
                        <ThumbList>
                            {slides.map(n => (
                                <ThumbRow key={n} $active={n === 1}>
                                    <ThumbIndex>
                                        {n}
                                        <svg width="10" height="9" viewBox="0 0 10 9">
                                            <path d="M5 0v4M1 3l4 2 4-2M2 8l3-3 3 3" fill="none" stroke="#444" />
                                        </svg>
                                    </ThumbIndex>
                                    <ThumbCard $active={n === 1}>
                                        <ThumbArt n={n} />
                                    </ThumbCard>
                                </ThumbRow>
                            ))}
                        </ThumbList>
                        <PaneScroll>
                            <Arrow />
                            <ScrollThumb $h={115} $mt={2}>
                                <Grip />
                            </ScrollThumb>
                            <Arrow $down $mt="auto" />
                        </PaneScroll>
                    </PaneBody>
                </SidePane>

                <Center>
                    <WorkRow>
                        <Canvas>
                            <Slide>
                                <Logo>
                                    <svg width="34" height="30" viewBox="0 0 32 30">
                                        <path d="M0 12c5-1 8 0 10 3-3 0-5 1-6 3 3-2 7-2 9 1 1 2 0 6-3 9 7-1 12-6 12-13l4-3-4-1c-2-5-6-9-12-10 3 3 5 5 5 8C11 7 5 8 0 12z" fill="#c1266c" />
                                        <path d="M15 3c4 0 9 2 12 7l-5-1c-2-3-4-5-7-6z" fill="#e0325a" />
                                    </svg>
                                    <LogoName>马士兵教育</LogoName>
                                    <LogoUrl>www.mashibing.com</LogoUrl>
                                </Logo>
                                <SlideTitle>一字排开</SlideTitle>
                                <SlideAuthor>授课：杨淑娟</SlideAuthor>
                                <SlideUrl>http://mashibing.com</SlideUrl>
                            </Slide>
                        </Canvas>
                        <MainScroll>
                            <Arrow />
                            <ScrollThumb $h={28} $mt={5}>
                                <Grip />
                            </ScrollThumb>
                        </MainScroll>
                    </WorkRow>
                    <Notes>单击此处添加备注</Notes>
                </Center>
            </Main>

            <StatusBar>
                <StatusCell $w={124}>幻灯片 第 1 张，共 16 张</StatusCell>
                <StatusCell $w={84} $center>
                    "Office 主题"
                </StatusCell>
                <StatusCell $w={60} $center>
                    中文(中国)
                </StatusCell>
                <ViewButtons>
                    <ViewButton $on>
                        <svg width="11" height="11">
                            <path d="M.5.5h10v10H.5zM6 .5v10M6 6h4.5" fill="none" stroke="#444" />
                        </svg>
                    </ViewButton>
                    <ViewButton>
                        <svg width="11" height="11">
                            <path d="M.5 1.5h4v3h-4zM6.5 1.5h4v3h-4zM.5 6.5h4v3h-4zM6.5 6.5h4v3h-4z" fill="none" stroke="#555" />
                        </svg>
                    </ViewButton>
                </ViewButtons>
            </StatusBar>

            <Taskbar>
                <Launch $w={40}>
                    <svg width="15" height="15" viewBox="0 0 15 15">
                        <path d="M0 2l6-1v6H0zM7 1l8-1v7H7zM0 8h6v6l-6-1zM7 8h8v7l-8-1z" fill="#e9f0f6" />
                    </svg>
                </Launch>
                <Launch $w={46}>
                    <svg width="18" height="20" viewBox="0 0 18 20">
                        <circle cx="9" cy="10" r="8.5" fill="#5cc24a" />
                        <path d="M4 10h10M13 7a5 5 0 1 0 0 6" fill="none" stroke="#fff" strokeWidth="2" />
                    </svg>
                </Launch>
                <TaskItem>
                    <svg width="18" height="20" viewBox="0 0 18 20">
                        <path d="M0 0h18v20H0z" fill="#1cd08c" />
                        <path d="M0 0h9L0 10z" fill="#f0e040" />
                        <path d="M3 3h12v14H3z" fill="#111" />
                        <text x="4" y="10" fontSize="7" fontWeight="bold" fill="#fff" fontFamily="Liberation Sans, sans-serif">
                            PC
                        </text>
                        <path d="M5 14h5v1H5z" fill="#fff" />
                    </svg>
                    <span>vippython [E:\vip...</span>
                </TaskItem>
                <TaskItem>
                    <svg width="18" height="20" viewBox="0 0 18 20">
                        <path d="M4 0h12l2 2v16H4z" fill="#f6e4d8" />
                        <path d="M0 3h12v14H0z" fill="#d9552c" />
                        <path d="M3 6h5a2 2 0 0 1 0 5H5v4H3z" fill="#fff" />
                    </svg>
                    <span>第6站-一次排开.p...</span>
                </TaskItem>
                <TaskItem>
                    <svg width="18" height="20" viewBox="0 0 18 20">
                        <path d="M9 0l9 6-3 11-6 3-6-3L0 6z" fill="#111" />
                        <path d="M9 4l5 9H4zM9 8l2 4H7z" fill="none" stroke="#8ed03c" strokeWidth="1.2" />
                    </svg>
                    <span>莱维特控制中心</span>
                </TaskItem>
                <TaskItem>
                    <svg width="20" height="20" viewBox="0 0 20 20">
                        <circle cx="8" cy="12" r="7.5" fill="#38b4e8" />
                        <path d="M7 1h12l-3 6h-6l-1 3c4-1 7 1 6 5s-6 5-10 3z" fill="#ee3c74" />
                    </svg>
                    <span>超级音雄-聊天1</span>
                </TaskItem>
                <Tray>
                    <TrayCell $w={14}>
                        <svg width="13" height="8">
                            <path d="M1 7l5.5-6L12 7" fill="none" stroke="#dfe6ec" />
                        </svg>
                    </TrayCell>
                    <TrayCell $w={15}>
                        <svg width="15" height="13">
                            <path d="M1 4h3l3-3v11L4 9H1zM9 4c1 1 1 4 0 5M11 2c2 2 2 7 0 9" fill="none" stroke="#dfe6ec" />
                        </svg>
                    </TrayCell>
                    <TrayCell $w={15}>
                        <svg width="15" height="10">
                            <path d="M0 1h2v2H0zM3 2h12v7H3z" fill="#dfe6ec" />
                        </svg>
                    </TrayCell>
                    <TrayCell $w={15}>
                        <svg width="15" height="13">
                            <path d="M3 12a9 9 0 0 1 10-9M6 12a6 6 0 0 1 7-6M9 12a3 3 0 0 1 4-3" fill="none" stroke="#dfe6ec" />
                            <path d="M0 13l3.5-6L7 13z" fill="#e8b830" />
                        </svg>
                    </TrayCell>
                    <TrayCell $w={15}>中</TrayCell>
                    <TrayCell $w={24}>
                        <WanBadge $size={14}>万</WanBadge>
                    </TrayCell>
                </Tray>
            </Taskbar>

            <Recorder>
                <Timer>00:01</Timer>
                <RecorderTray>
                    <PauseBar />
                    <PauseBar />
                    <StopSquare />
                    <svg width="13" height="13" viewBox="0 0 13 13">
                        <path d="M9 1l3 3-7 7-4 1 1-4z" fill="#77797c" />
                    </svg>
                </RecorderTray>
            </Recorder>
            <Cursor width="12" height="18" viewBox="0 0 12 18">
                <path d="M1 1v13l3-3 2.5 6 2.5-1-2.5-6H11z" fill="#fff" stroke="#222" />
            </Cursor>

            <Subtitle>我们现在去给大家讲一下</Subtitle>

            <Mascot width="18" height="68" viewBox="0 0 18 68">
                <path d="M11 4l3 3-1 3h2v24h-3v-8l-2-2 2-2-2-3 2-2-2-4z" fill="#111" />
                <path d="M13 30h3v20h-3z" fill="#2cc4a8" />
                <path d="M13 44l5-3v27H4z" fill="#e8316c" />
                <path d="M13 48l5-4v14h-8z" fill="#28d0c8" />
            </Mascot>

            <ImeBar>
                <ImeCell>
                    <WanBadge $size={15}>万</WanBadge>
                </ImeCell>
                <ImeCell $gapLeft={5}>中</ImeCell>
                <ImeCell>
                    <svg width="13" height="14" viewBox="0 0 13 14">
                        <path d="M9 1c2 5-1 10-8 10 4 3 11 1 11-5 0-2-1-4-3-5z" fill="#2f7fc8" />
                    </svg>
                </ImeCell>
                <ImeCell>
                    <svg width="14" height="14" viewBox="0 0 14 14">
                        <circle cx="4" cy="4" r="2" fill="none" stroke="#2f7fc8" />
                        <path d="M9 6h3c0 3-1 5-3 6 1-2 1-3 0-3z" fill="#2f7fc8" />
                    </svg>
                </ImeCell>
                <ImeCell>
                    <svg width="14" height="12" viewBox="0 0 14 12">
                        <path d="M.5 1.5h13v9H.5zM3 4h8M3 6h8M4 8.5h6" fill="none" stroke="#2f7fc8" />
                    </svg>
                </ImeCell>
                <ImeCell>
                    <svg width="12" height="12" viewBox="0 0 12 12">
                        <circle cx="6" cy="3.5" r="2.5" fill="#c8cacc" />
                        <path d="M0 12c0-4 3-5 6-5s6 1 6 5z" fill="#d4d6d8" />
                    </svg>
                </ImeCell>
                <ImeCell>简</ImeCell>
                <ImeCell>
                    <svg width="15" height="11" viewBox="0 0 15 11">
                        <path d="M0 1a1 1 0 0 1 1-1h8a1 1 0 0 1 1 1v9a1 1 0 0 1-1 1H1a1 1 0 0 1-1-1zM11 4l4-2v7l-4-2z" fill="#e03a44" />
                    </svg>
                </ImeCell>
                <ImeCell>
                    <svg width="14" height="12" viewBox="0 0 14 12">
                        <path d="M4 0h6l4 3-2 3-1-1v7H3V5L2 6 0 3z" fill="#2f7fc8" />
                    </svg>
                </ImeCell>
                <ImeCell>
                    <svg width="13" height="13" viewBox="0 0 13 13">
                        <circle cx="6.5" cy="6.5" r="3.8" fill="none" stroke="#2f7fc8" strokeWidth="2" />
                        <path d="M6.5 0v2.5M6.5 10.5V13M0 6.5h2.5M10.5 6.5H13M2 2l1.5 1.5M9.5 9.5L11 11M11 2L9.5 3.5M3.5 9.5L2 11" stroke="#2f7fc8" strokeWidth="1.5" />
                    </svg>
                </ImeCell>
            </ImeBar>
        </Page>
    )
}
